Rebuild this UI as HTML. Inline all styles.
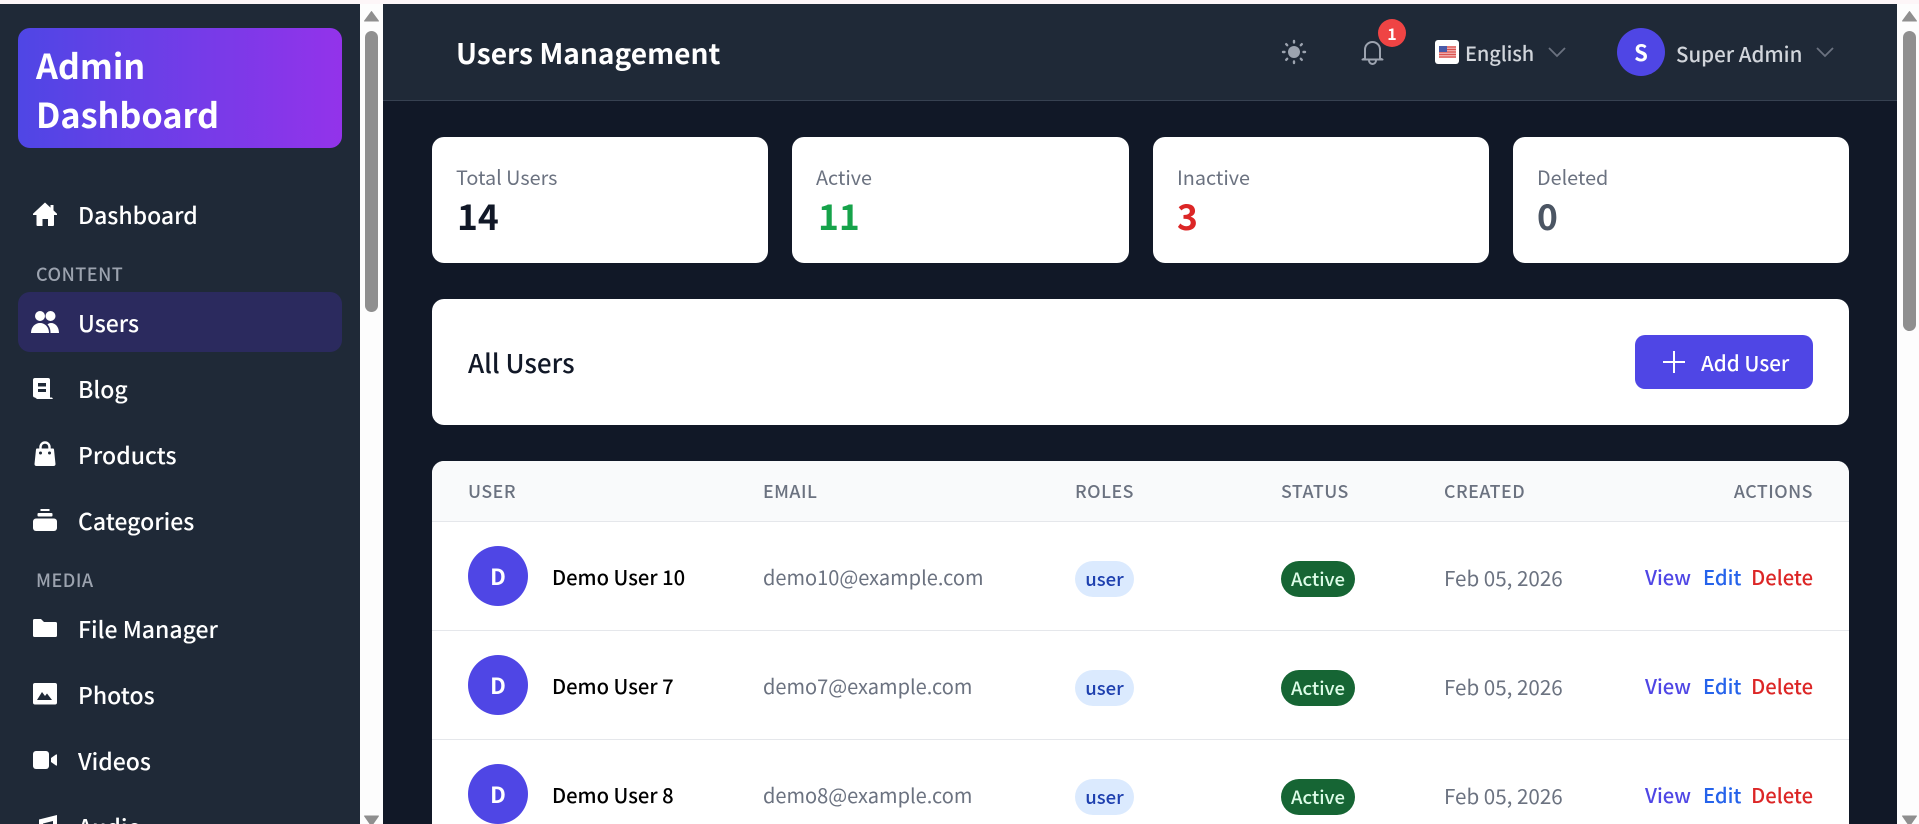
<!DOCTYPE html>
<html lang="en"><head><meta charset="utf-8"><title>Users Management</title>
<style>
html,body{margin:0;padding:0;width:1919px;height:824px;overflow:hidden;background:#fdf6f8}
body{position:relative;font-family:"Noto Sans CJK JP","Liberation Sans",sans-serif;color:#111827}
.b{position:absolute}
.t{position:absolute;white-space:nowrap;line-height:32px;height:32px}
svg{position:absolute;overflow:visible}
.nav{font-size:23px;font-weight:500;color:#fff;left:78px}
.sec{font-size:18px;font-weight:500;color:#9ca3af;left:36px;letter-spacing:.5px}
.card{background:#fff;border-radius:12px}
.lab{font-size:19.8px;color:#6b7280;font-weight:400}
.val{font-size:35.4px;font-weight:700}
.th{font-size:17.8px;font-weight:500;color:#6b7280;letter-spacing:.5px}
.name{font-size:20.2px;font-weight:500;color:#000}
.em{font-size:20px;color:#6b7280}
.dt{font-size:20.6px;color:#6b7280}
.av{position:absolute;width:60px;height:60px;border-radius:50%;background:#4f46e5;color:#fff;left:468px;text-align:center;line-height:60px;font-size:22px;font-weight:700}
.pill{position:absolute;height:36px;border-radius:18px;text-align:center;line-height:36px;font-size:18.5px;font-weight:500}
.role{left:1075px;width:59px;background:#dbeafe;color:#1e40af}
.act{left:1281px;width:74px;background:#166534;color:#dcfce7}
.a{font-size:20.2px;font-weight:500}
.line{position:absolute;left:432px;width:1417px;height:1px;background:#e5e7eb}
</style></head><body>

<!-- sidebar -->
<div class="b" style="left:0;top:4px;width:360px;height:820px;background:#1f2937"></div>
<div class="b" style="left:360px;top:4px;width:23px;height:820px;background:#fdfdfd"></div>
<svg style="left:360px;top:0" width="23" height="824"><path d="M11.500 11.500l7 9.500h-14z" fill="#8f8f8f" stroke="#8f8f8f" stroke-linejoin="round"/><rect x="5" y="31" width="13" height="281" rx="6.500" fill="#8f8f8f"/><path d="M11.500 826l-7-10h14z" fill="#8f8f8f" stroke="#8f8f8f" stroke-linejoin="round"/></svg>
<div class="b" style="left:18px;top:28px;width:324px;height:120px;border-radius:12px;background:linear-gradient(90deg,#4f46e5,#9333ea)"></div>
<div class="t" style="left:36px;top:40px;font-size:34.200px;font-weight:700;color:#fff;line-height:48px;height:48px">Admin</div>
<div class="t" style="left:36px;top:89px;font-size:34.200px;font-weight:700;color:#fff;line-height:48px;height:48px">Dashboard</div>

<svg style="left:33px;top:202px" width="24" height="24" viewBox="0 0 24 24"><path d="M12 0.500L17.500 5.600V3h3v5.400L24 11.800v1.200h-3v10a1 1 0 0 1-1 1h-5v-7H9.500v7H4.500a1 1 0 0 1-1-1V13H0v-1.200z" fill="#fff"/></svg>
<div class="t nav" style="top:198px">Dashboard</div>
<div class="t sec" style="top:258px">CONTENT</div>
<div class="b" style="left:18px;top:292px;width:324px;height:60px;border-radius:12px;background:#2b2a5e"></div>
<svg style="left:31px;top:311px" width="28" height="22" viewBox="0 0 28 22"><circle cx="9" cy="5" r="5" fill="#fff"/><circle cx="19.500" cy="5" r="5" fill="#fff"/><path d="M0 22c0-6 4-10 9-10s9 4 9 10z" fill="#fff"/><path d="M19.500 22c0-4-1-6.500-3-8.500 1-1 2-1.500 3.500-1.500 4.500 0 8 4 8 10z" fill="#fff"/></svg>
<div class="t nav" style="top:306px">Users</div>
<svg style="left:33px;top:378px" width="20" height="22" viewBox="0 0 20 22"><path d="M2 0h13a2 2 0 0 1 2 2v17.500H2a2 2 0 0 1-2-2V2a2 2 0 0 1 2-2z" fill="#fff"/><rect x="5" y="5" width="8" height="3.500" fill="#1f2937"/><rect x="5" y="11" width="8" height="3" fill="#1f2937"/><path d="M2 19.500h17l1 1.500H4z" fill="#fff"/></svg>
<div class="t nav" style="top:372px">Blog</div>
<svg style="left:34px;top:441px" width="22" height="25" viewBox="0 0 22 25"><path d="M6.500 8V6a4.500 4.500 0 0 1 9 0v2" fill="none" stroke="#fff" stroke-width="2.400"/><path d="M3 7.500h16a1 1 0 0 1 1 1L21.500 23a2 2 0 0 1-2 2h-17a2 2 0 0 1-2-2L2 8.500a1 1 0 0 1 1-1z" fill="#fff"/><circle cx="6.500" cy="12" r="1.500" fill="#1f2937"/><circle cx="15.500" cy="12" r="1.500" fill="#1f2937"/></svg>
<div class="t nav" style="top:438px">Products</div>
<svg style="left:33px;top:509px" width="24" height="22" viewBox="0 0 24 22"><rect x="7.500" width="9" height="2" fill="#fff"/><rect x="4.500" y="4" width="15" height="3.500" rx="1" fill="#fff"/><rect y="9.500" width="24" height="12.500" rx="3" fill="#fff"/></svg>
<div class="t nav" style="top:504px">Categories</div>
<div class="t sec" style="top:564px">MEDIA</div>
<svg style="left:33px;top:619px" width="24" height="18" viewBox="0 0 24 18"><path d="M1.500 0h6.500l3 3h11.500a1.500 1.500 0 0 1 1.500 1.500V16.500a1.500 1.500 0 0 1-1.500 1.500H1.500A1.500 1.500 0 0 1 0 16.500V1.500A1.500 1.500 0 0 1 1.500 0z" fill="#fff"/></svg>
<div class="t nav" style="top:612px">File Manager</div>
<svg style="left:33px;top:683px" width="24" height="22" viewBox="0 0 24 22"><rect width="24" height="21.500" rx="2" fill="#fff"/><path d="M4 17l5-8 3 4 2-2.500 5 6.500z" fill="#1f2937"/></svg>
<div class="t nav" style="top:678px">Photos</div>
<svg style="left:33px;top:751px" width="24" height="18" viewBox="0 0 24 18"><rect width="16" height="18" rx="3" fill="#fff"/><path d="M18 7l5-3.500a.6.6 0 0 1 1 .5v10a.6.6 0 0 1-1 .5l-5-3.500z" fill="#fff"/></svg>
<div class="t nav" style="top:744px">Videos</div>
<svg style="left:38px;top:815px" width="20" height="20" viewBox="0 0 20 20"><path d="M1 4.500L19 0v20h-4V6L5 8.500V20H1z" fill="#fff"/></svg>
<div class="t nav" style="top:810px">Audio</div>

<!-- main -->
<div class="b" style="left:383px;top:4px;width:1514px;height:820px;background:#111827"></div>
<div class="b" style="left:383px;top:4px;width:1514px;height:96px;background:#1f2937;border-bottom:1px solid #374151"></div>
<div class="b" style="left:1897px;top:4px;width:22px;height:820px;background:#fdfdfd"></div>
<svg style="left:1897px;top:0" width="22" height="824"><path d="M12.500 11.500l7 9.500h-14z" fill="#8f8f8f" stroke="#8f8f8f" stroke-linejoin="round"/><rect x="6" y="31" width="13" height="300" rx="6.500" fill="#8f8f8f"/><path d="M12.500 826l-7-10h14z" fill="#8f8f8f" stroke="#8f8f8f" stroke-linejoin="round"/></svg>

<div class="t" style="left:456px;top:37px;font-size:28.100px;font-weight:700;color:#fff">Users Management</div>
<svg style="left:1282px;top:40px" width="24" height="24" viewBox="0 0 24 24" fill="#9ca3af"><circle cx="12" cy="12" r="6"/><g stroke="#9ca3af" stroke-width="2.400" stroke-linecap="round"><path d="M12 1v1.500M12 21.500V23M1 12h1.500M21.500 12H23M4.200 4.200l1 1M18.800 18.800l1 1M4.200 19.800l1-1M18.800 5.200l1-1"/></g></svg>
<svg style="left:1361px;top:39px" width="23" height="25" viewBox="0 0 23 25" fill="none" stroke="#9ca3af" stroke-width="2" stroke-linejoin="round" stroke-linecap="round"><path d="M4 19.500V10.500a7.500 7.500 0 0 1 15 0v9l2.500 1H1.500z"/><path d="M8 21.500a3.500 3.500 0 0 0 7 0"/></svg>
<div class="b" style="left:1378px;top:19px;width:28px;height:28px;border-radius:50%;background:#ef4444;color:#fff;text-align:center;line-height:28px;font-size:16px;font-weight:700">1</div>
<div class="b" style="left:1435px;top:40px;width:24px;height:24px;border-radius:3px;background:#fff"></div>
<svg style="left:1439px;top:46px" width="17" height="12" viewBox="0 0 17 12"><rect width="17" height="12" fill="#f3b4b4"/><path d="M0 1h17M0 3.500h17M0 6h17M0 8.500h17M0 11h17" stroke="#d9534f" stroke-width="1.200"/><rect width="8" height="6" fill="#4a5aa8"/></svg>
<div class="t" style="left:1465px;top:37px;font-size:20px;font-weight:500;letter-spacing:-.1px;color:#d1d5db">English</div>
<svg style="left:1548px;top:47px" width="18" height="11" fill="none" stroke="#6b7280" stroke-width="1.800"><path d="M1 1l8 8 8-8"/></svg>
<div class="b" style="left:1617px;top:28px;width:48px;height:48px;border-radius:50%;background:#4f46e5;color:#fff;text-align:center;line-height:48px;font-size:22px;font-weight:700">S</div>
<div class="t" style="left:1676px;top:37px;font-size:20.500px;font-weight:500;color:#d1d5db">Super Admin</div>
<svg style="left:1816px;top:47px" width="18" height="11" fill="none" stroke="#6b7280" stroke-width="1.800"><path d="M1 1l8 8 8-8"/></svg>

<!-- stats -->
<div class="b card" style="left:432px;top:137px;width:336px;height:126px"></div>
<div class="b card" style="left:792px;top:137px;width:337px;height:126px"></div>
<div class="b card" style="left:1153px;top:137px;width:336px;height:126px"></div>
<div class="b card" style="left:1513px;top:137px;width:336px;height:126px"></div>
<div class="t lab" style="left:456px;top:161px">Total Users</div>
<div class="t lab" style="left:816px;top:161px">Active</div>
<div class="t lab" style="left:1177px;top:161px">Inactive</div>
<div class="t lab" style="left:1537px;top:161px">Deleted</div>
<div class="t val" style="left:457px;top:200px;color:#111827">14</div>
<div class="t val" style="left:818px;top:200px;color:#16a34a">11</div>
<div class="t val" style="left:1177px;top:200px;color:#dc2626">3</div>
<div class="t val" style="left:1537px;top:200px;color:#4b5563">0</div>

<!-- title -->
<div class="b card" style="left:432px;top:299px;width:1417px;height:126px"></div>
<div class="t" style="left:468px;top:347px;font-size:26px;font-weight:500;color:#111827">All Users</div>
<div class="b" style="left:1635px;top:335px;width:178px;height:54px;border-radius:10px;background:#4f46e5"></div>
<svg style="left:1663px;top:351px" width="22" height="22" stroke="#fff" stroke-width="2"><path d="M11 0v22M0 11h22"/></svg>
<div class="t" style="left:1701px;top:346px;font-size:20.600px;font-weight:500;color:#fff">Add User</div>

<!-- table -->
<div class="b" style="left:432px;top:461px;width:1417px;height:363px;background:#fff;border-radius:12px 12px 0 0"></div>
<div class="b" style="left:432px;top:461px;width:1417px;height:60px;background:#f9fafb;border-radius:12px 12px 0 0"></div>
<div class="line" style="top:521px"></div><div class="line" style="top:630px"></div><div class="line" style="top:739px"></div>
<div class="t th" style="left:468px;top:475px">USER</div>
<div class="t th" style="left:763px;top:475px">EMAIL</div>
<div class="t th" style="left:1075px;top:475px">ROLES</div>
<div class="t th" style="left:1281px;top:475px">STATUS</div>
<div class="t th" style="left:1444px;top:475px">CREATED</div>
<div class="t th" style="right:106px;top:475px">ACTIONS</div>

<div class="av" style="top:546px">D</div>
<div class="t name" style="left:552px;top:561px">Demo User 10</div>
<div class="t em" style="left:763px;top:561px">demo10@example.com</div>
<div class="pill role" style="top:561px">user</div>
<div class="pill act" style="top:561px">Active</div>
<div class="t dt" style="left:1444px;top:561px">Feb 05, 2026</div>
<div class="t a" style="left:1645px;top:561px;color:#4f46e5">View</div>
<div class="t a" style="left:1703px;top:561px;color:#2563eb">Edit</div>
<div class="t a" style="right:106px;top:561px;color:#dc2626">Delete</div>

<div class="av" style="top:655px">D</div>
<div class="t name" style="left:552px;top:670px">Demo User 7</div>
<div class="t em" style="left:763px;top:670px">demo7@example.com</div>
<div class="pill role" style="top:670px">user</div>
<div class="pill act" style="top:670px">Active</div>
<div class="t dt" style="left:1444px;top:670px">Feb 05, 2026</div>
<div class="t a" style="left:1645px;top:670px;color:#4f46e5">View</div>
<div class="t a" style="left:1703px;top:670px;color:#2563eb">Edit</div>
<div class="t a" style="right:106px;top:670px;color:#dc2626">Delete</div>

<div class="av" style="top:764px">D</div>
<div class="t name" style="left:552px;top:779px">Demo User 8</div>
<div class="t em" style="left:763px;top:779px">demo8@example.com</div>
<div class="pill role" style="top:779px">user</div>
<div class="pill act" style="top:779px">Active</div>
<div class="t dt" style="left:1444px;top:779px">Feb 05, 2026</div>
<div class="t a" style="left:1645px;top:779px;color:#4f46e5">View</div>
<div class="t a" style="left:1703px;top:779px;color:#2563eb">Edit</div>
<div class="t a" style="right:106px;top:779px;color:#dc2626">Delete</div>
</body></html>
